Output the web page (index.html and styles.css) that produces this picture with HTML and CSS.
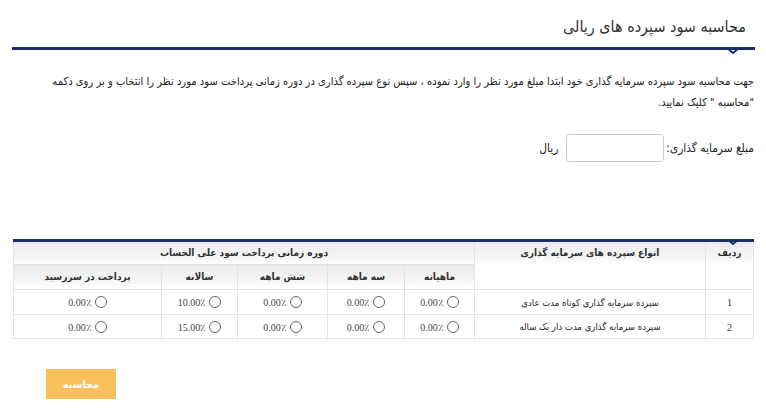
FILE: index.html
```html
<!DOCTYPE html>
<html lang="fa" dir="rtl">
<head>
<meta charset="utf-8">
<title>محاسبه سود سپرده های ریالی</title>
<link rel="stylesheet" href="styles.css">
</head>
<body>
<div class="page">
  <div class="title-bar">
    <h1 class="title">محاسبه سود سپرده های ریالی</h1>
    <svg class="chev chev-title" width="14" height="7" viewBox="0 0 14 7"><path d="M1 0 L7 5 L13 0" fill="none" stroke="#1d2d6a" stroke-width="2"/></svg>
  </div>

  <p class="intro">جهت محاسبه سود سپرده سرمایه گذاری خود ابتدا مبلغ مورد نظر را وارد نموده ، سپس نوع سپرده گذاری در دوره زمانی پرداخت سود مورد نظر را انتخاب و بر روی دکمه<br>"محاسبه " کلیک نمایید.</p>

  <div class="amount">
    <label class="amount-label">مبلغ سرمایه گذاری:</label>
    <input class="amount-input" type="text">
    <span class="unit">ریال</span>
  </div>

  <div class="table-wrap">
    <svg class="chev chev-table" width="14" height="7" viewBox="0 0 14 7"><path d="M1 0 L7 5 L13 0" fill="none" stroke="#1d2d6a" stroke-width="2"/></svg>
    <table class="grid">
      <colgroup>
        <col style="width:48px"><col style="width:231px"><col style="width:70px"><col style="width:77px"><col style="width:90px"><col style="width:76px"><col style="width:148px">
      </colgroup>
      <thead>
        <tr class="h1row">
          <th rowspan="2">ردیف</th>
          <th rowspan="2">انواع سپرده های سرمایه گذاری</th>
          <th colspan="5">دوره زمانی پرداخت سود علی الحساب</th>
        </tr>
        <tr class="h2row">
          <th>ماهیانه</th>
          <th>سه ماهه</th>
          <th>شش ماهه</th>
          <th>سالانه</th>
          <th>پرداخت در سررسید</th>
        </tr>
      </thead>
      <tbody>
        <tr class="r1">
          <td class="num">1</td>
          <td class="name">سپرده سرمایه گذاری کوتاه مدت عادی</td>
          <td><span class="radio"></span><span class="pct">0.00٪</span></td>
          <td><span class="radio"></span><span class="pct">0.00٪</span></td>
          <td><span class="radio"></span><span class="pct">0.00٪</span></td>
          <td><span class="radio"></span><span class="pct">10.00٪</span></td>
          <td><span class="radio"></span><span class="pct">0.00٪</span></td>
        </tr>
        <tr class="r2">
          <td class="num">2</td>
          <td class="name">سپرده سرمایه گذاری مدت دار یک ساله</td>
          <td><span class="radio"></span><span class="pct">0.00٪</span></td>
          <td><span class="radio"></span><span class="pct">0.00٪</span></td>
          <td><span class="radio"></span><span class="pct">0.00٪</span></td>
          <td><span class="radio"></span><span class="pct">15.00٪</span></td>
          <td><span class="radio"></span><span class="pct">0.00٪</span></td>
        </tr>
      </tbody>
    </table>
  </div>

  <div class="actions">
    <button class="btn" type="button">محاسبه</button>
  </div>
</div>
</body>
</html>
```

FILE: styles.css
```css
html, body {
  margin: 0;
  padding: 0;
  background: #fff;
}
body {
  font-family: "DejaVu Sans Condensed", "DejaVu Sans", sans-serif;
  color: #333;
  direction: rtl;
}
.page {
  padding: 0 11px 0 12px;
}
.title-bar {
  position: relative;
  padding: 17px 9px 10px 0;
  border-bottom: 3px solid #1d2d6a;
}
.title {
  margin: 0;
  font-size: 16px;
  font-weight: normal;
  line-height: 20px;
  color: #333;
}
.chev {
  position: absolute;
  display: block;
}
.chev-title {
  right: 15px;
  bottom: -8px;
}
.intro {
  margin: 21px 1px 0 0;
  font-size: 11.1px;
  line-height: 21px;
  color: #222;
}
.amount {
  display: flex;
  align-items: center;
  margin-top: 21px;
  padding-right: 1px;
  font-size: 11.8px;
  color: #222;
}
.amount-label {
  margin-left: 2px;
}
.amount-input {
  box-sizing: border-box;
  width: 98px;
  height: 28px;
  border: 1px solid #ccc;
  border-radius: 4px;
  margin: 0;
  padding: 0 6px;
  background: #fff;
}
.unit {
  margin-right: 8px;
}
.table-wrap {
  position: relative;
  margin: 77px 1px 0 2px;
}
.chev-table {
  right: 14px;
  top: 0;
}
.grid {
  width: 740px;
  table-layout: fixed;
  border-collapse: collapse;
  border-top: 3px solid #1d2d6a;
  font-size: 10px;
}
.grid th, .grid td {
  border: 1px solid #e3e3e3;
  text-align: center;
  padding: 0;
}
.grid th {
  font-weight: bold;
  color: #333;
  background: linear-gradient(to bottom, #ececec 0, #f4f4f4 14px, #fff 22px) no-repeat;
  background-size: 100% 23px;
  vertical-align: top;
  line-height: 22px;
  font-size: 10px;
}
.grid thead tr:first-child th {
  border-top: none;
}
.h1row { height: 23px; }
.h2row { height: 25px; }
.h2row th { line-height: 24px; }
.r1 { height: 25px; }
.r2 { height: 24px; }
.grid td {
  font-family: "Liberation Serif", serif;
  font-size: 10px;
  color: #444;
  vertical-align: middle;
}
.grid td.name {
  font-family: "DejaVu Sans Condensed", "DejaVu Sans", sans-serif;
  font-size: 9.5px;
  color: #222;
}
.grid td.num {
  font-size: 11px;
}
.radio {
  display: inline-block;
  width: 10px;
  height: 10px;
  border: 1px solid #666;
  border-radius: 50%;
  vertical-align: -2px;
  margin-left: 4px;
  background: #fff;
}
.pct {
  display: inline-block;
  direction: ltr;
}
.actions {
  display: flex;
  justify-content: flex-end;
  margin-top: 30px;
  padding-left: 34px;
}
.btn {
  width: 70px;
  height: 30px;
  border: none;
  background: #f8c15c;
  color: #fff;
  font-family: "DejaVu Sans Condensed", "DejaVu Sans", sans-serif;
  font-size: 11px;
  font-weight: bold;
  padding: 0;
}
```
